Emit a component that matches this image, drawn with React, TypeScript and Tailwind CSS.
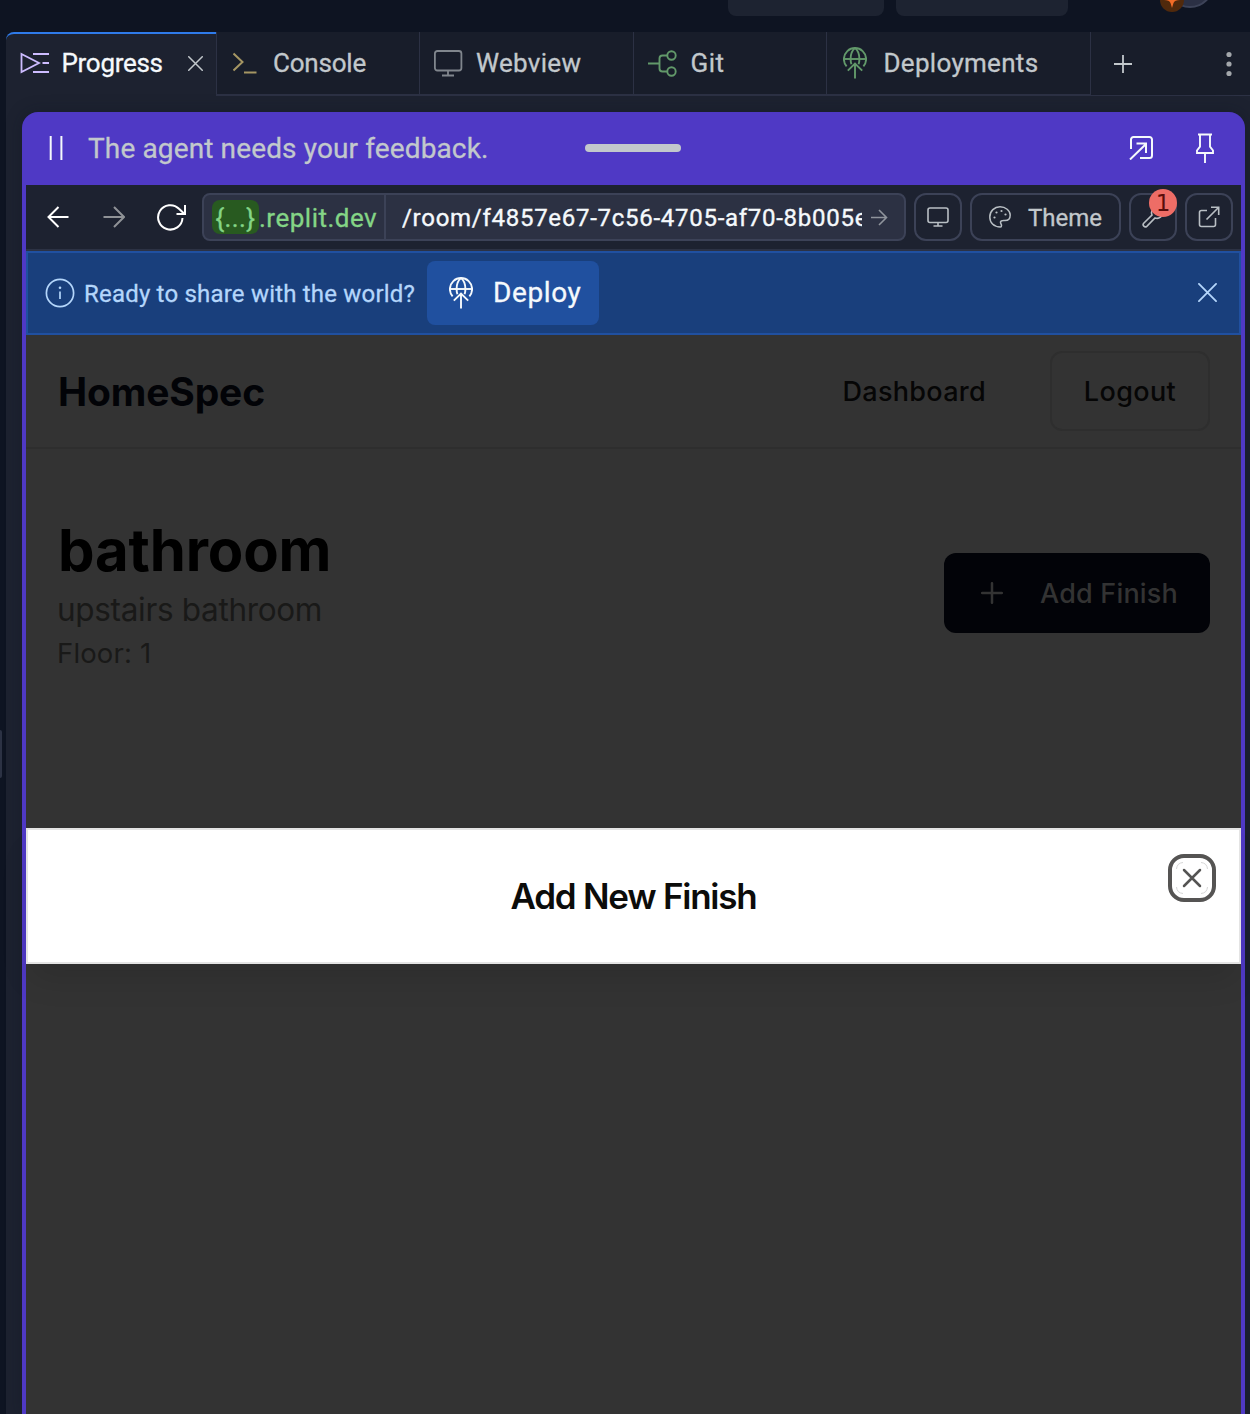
import type { ReactNode } from 'react';

type IconProps = { w: number; h: number; className?: string; sw?: number; children: ReactNode };

function Icon({ w, h, className = '', sw = 2, children }: IconProps) {
  return (
    <svg
      width={w}
      height={h}
      viewBox={`0 0 ${w} ${h}`}
      fill="none"
      stroke="currentColor"
      strokeWidth={sw}
      className={`block shrink-0 ${className}`}
    >
      {children}
    </svg>
  );
}

function DeployIcon({ className = '' }: { className?: string }) {
  return (
    <Icon w={24} h={32} sw={1.9} className={className}>
      <path d="M3.6 19.4A11.1 11.1 0 1 1 20.4 19.4" />
      <path d="M1 12H23" />
      <path d="M12 1C9 3.4 7.6 7.4 7.6 12c0 2 .3 3.700.8 5.200" />
      <path d="M12 1c3 2.400 4.400 6.400 4.400 11 0 2-.3 3.700-.8 5.200" />
      <path d="M12 31.500V16.500M4.800 23.700L12 16.500l7.200 7.200" />
    </Icon>
  );
}

function CloseIcon({ size, sw, className = '' }: { size: number; sw: number; className?: string }) {
  return (
    <svg width={size} height={size} viewBox="0 0 20 20" fill="none" stroke="currentColor" strokeWidth={sw} strokeLinecap="round" className={`block shrink-0 ${className}`}>
      <path d="M1 1l18 18M19 1L1 19" />
    </svg>
  );
}

function TopBar() {
  return (
    <div className="relative h-8 shrink-0 overflow-hidden">
      <div className="flex h-4 gap-3 pl-[728px]">
        <div className="w-[156px] rounded-b-lg bg-[#1d2331]" />
        <div className="w-[172px] rounded-b-lg bg-[#1d2331]" />
      </div>
      <div className="absolute left-[1166px] -top-10 size-12 rounded-full border-2 border-[#3d4358] bg-[#2b3044]" />
      <div className="absolute left-[1160px] -top-3 size-6 rounded-full bg-[#50290c]">
        <svg width="24" height="24" viewBox="0 0 24 24" className="block" fill="#f26b27">
          <path d="M12 4l2 6 6 2q-5.500 0-6.500 3L12 20l-1.500-5q-1-3-6.500-3l6-2z" />
        </svg>
      </div>
    </div>
  );
}

const tabText = "font-['Roboto',sans-serif] text-[26px] leading-8 whitespace-nowrap [-webkit-text-stroke:0.3px]";

function Tabs() {
  return (
    <div className="flex h-16 shrink-0 text-[#c2c8cc]">
      <div className="flex w-[210px] items-center rounded-tl-lg border-t-2 border-[#2f7bea] pb-1 pl-3.5">
        <Icon w={29} h={22} className="text-[#cdbcff]" sw={1.8}>
          <path d="M1.500 2L19 11 1.500 20z" />
          <path d="M13 2h16M22.500 11H29M13 20h16" />
        </Icon>
        <span className={`${tabText} ml-[12.500px] w-[104px] tracking-[-0.300px] text-[#f5f9fc]`}>Progress</span>
        <CloseIcon size={15} sw={2} className="ml-[22.500px]" />
      </div>
      <div className="flex w-[203px] items-center border-b-2 border-l border-[#2c3144] bg-[#181d2a] pl-4">
        <Icon w={25} h={24} className="text-[#a59663]">
          <path d="M.5 2.500l9 8.500-9 8.500" />
          <path d="M11 21.500H23.500" />
        </Icon>
        <span className={`${tabText} ml-[15px] tracking-[-0.2px]`}>Console</span>
      </div>
      <div className="flex w-[214px] items-center border-b-2 border-l border-[#2c3144] bg-[#181d2a] pl-3.5">
        <Icon w={29} h={27} className="text-[#80868d]" sw={1.8}>
          <rect x=".9" y="1" width="26.500" height="19.500" rx="2.500" />
          <path d="M14 20.500V25M8 25.500h12" />
        </Icon>
        <span className={`${tabText} ml-[13px] tracking-[0.3px]`}>Webview</span>
      </div>
      <div className="flex w-[193px] items-center border-b-2 border-l border-[#2c3144] bg-[#181d2a] pl-3.5">
        <Icon w={29} h={27} className="text-[#62996a]" sw={1.900}>
          <path d="M0 13.500h11.500M19 5.500h-4.500a3 3 0 0 0-3 3v10a3 3 0 0 0 3 3H19" />
          <circle cx="23.500" cy="5.500" r="4.200" />
          <circle cx="23.500" cy="21.500" r="4.200" />
        </Icon>
        <span className={`${tabText} ml-[13.500px] tracking-[0.5px]`}>Git</span>
      </div>
      <div className="flex w-[265px] items-center border-x border-b-2 border-[#2c3144] bg-[#181d2a] pl-4">
        <DeployIcon className="text-[#62996a]" />
        <span className={`${tabText} ml-[16.500px] tracking-[0.3px]`}>Deployments</span>
      </div>
      <div className="flex flex-1 items-center justify-between border-b border-[#2c3144] bg-[#181d2a] pr-[18px] pl-[22px]">
        <Icon w={20} h={20} sw={1.800}>
          <path d="M10 1v18M1 10h18" />
        </Icon>
        <Icon w={6} h={26} className="text-[#a3a7ab]" sw={0}>
          <g fill="currentColor">
            <circle cx="3" cy="3.500" r="2.600" />
            <circle cx="3" cy="13" r="2.600" />
            <circle cx="3" cy="22.500" r="2.600" />
          </g>
        </Icon>
      </div>
    </div>
  );
}

function AgentHeader() {
  return (
    <div className="relative flex h-[73px] shrink-0 items-center pr-[26px] pl-[23px] text-[#f5f9fc]">
      <Icon w={16} h={24} className="-mt-px">
        <path d="M1.700 0v24M12.400 0v24" />
      </Icon>
      <span className="ml-[23px] flex-1 font-['Roboto',sans-serif] text-[28px] leading-8 tracking-[0.130px] whitespace-nowrap text-[#c2c8cc] [-webkit-text-stroke:0.3px]">
        The agent needs your feedback.
      </span>
      <div className="absolute left-[559px] top-8 h-2 w-24 rounded-full bg-[#c2c8cc]" />
      <Icon w={24} h={24} className="-mt-px mr-px">
        <path d="M2 13V3.500A2.500 2.500 0 0 1 4.500 1h16A2.500 2.500 0 0 1 23 3.500v16a2.500 2.500 0 0 1-2.500 2.500H11" />
        <path d="M1 23.500L17 8M7.500 7.500H17V17" />
      </Icon>
      <Icon w={20} h={30} className="-mt-0.5 ml-[41px]" sw={1.900}>
        <path d="M3 1.500h14M5 1.500v12.200L2 17.500V20h16v-2.500l-3-3.800V1.500M10 20v10" />
      </Icon>
    </div>
  );
}

const toolButton = 'flex h-12 shrink-0 items-center rounded-xl border-2 border-[#3c4257] text-[#b9bfc4]';

function Toolbar() {
  return (
    <div className="flex h-[66px] shrink-0 items-center border-b-2 border-[#2c3244] bg-[#1d2230] pr-2 pl-[21px] text-white">
      <Icon w={22} h={22}>
        <path d="M21.500 11H1.500M11.500 1L1.500 11l10 10" />
      </Icon>
      <Icon w={22} h={22} className="ml-[34px] text-[#8f9296]">
        <path d="M.5 11h20.500M11 1l10 10-10 10" />
      </Icon>
      <Icon w={30} h={28} className="ml-[32px]">
        <path d="M25.500 15A12.200 12.200 0 1 1 22 5.800L27.500 11" />
        <path d="M28 2v9h-8.500" />
      </Icon>
      <div className="ml-[15px] flex h-12 w-[704px] shrink-0 items-center overflow-hidden rounded-lg border-2 border-[#3c4257] bg-[#2c3143]">
        <div className="flex h-full w-[182px] shrink-0 items-center border-r-2 border-[#3c4257] pl-2 font-['Roboto',sans-serif] text-[26px] leading-9 whitespace-nowrap text-[#84d586] [-webkit-text-stroke:0.3px]">
          <span className="h-[34px] w-[47px] rounded-lg bg-[#285a20] text-center tracking-[0.4px]">{'{...}'}</span>
          <span className="pt-0.5 tracking-[0.500px]">.replit.dev</span>
        </div>
        <div className="ml-4 w-[460px] overflow-hidden pt-0.5 font-['Roboto',sans-serif] text-[24px] leading-8 tracking-[0.720px] whitespace-nowrap text-[#f5f9fc] [-webkit-text-stroke:0.35px]">
          /room/f4857e67-7c56-4705-af70-8b005e
        </div>
        <Icon w={17} h={17} className="ml-[9px] text-[#8f949c]" sw={1.600}>
          <path d="M0 8.500h15.500M8 1l7.500 7.500L8 16" />
        </Icon>
      </div>
      <div className={`${toolButton} ml-2 w-12 justify-center`}>
        <Icon w={22} h={20} sw={1.600}>
          <path d="M3 1h16a2 2 0 0 1 2 2v10.500a2 2 0 0 1-2 2H3a2 2 0 0 1-2-2V3a2 2 0 0 1 2-2zM11 15.500V19M6.500 19h9" />
        </Icon>
      </div>
      <div className={`${toolButton} ml-2 w-[151px] pl-[17px]`}>
        <Icon w={22} h={22} sw={1.500}>
          <path d="M11.500 21C4.500 21 .8 16.500.8 11 .8 5 5.500.8 11 .8S21.200 4.500 21.200 9c0 3.800-2.400 5.600-5.200 5.600-1.800 0-4.200-.3-4.500 1.400-.2 1.500 1 2 1 3.500 0 1-.4 1.500-1 1.500z" />
          <g fill="currentColor" stroke="none">
            <circle cx="5.500" cy="11.500" r="1.100" />
            <circle cx="7.500" cy="6.500" r="1.100" />
            <circle cx="12.500" cy="5" r="1.100" />
            <circle cx="16.500" cy="8.500" r="1.100" />
          </g>
        </Icon>
        <span className="ml-[17px] pt-px font-['Roboto',sans-serif] text-[24px] leading-8 text-[#c2c8cc] [-webkit-text-stroke:0.3px]">Theme</span>
      </div>
      <div className={`${toolButton} relative ml-2 w-12 justify-center`}>
        <Icon w={22} h={22} sw={1.600}>
          <path d="M20.500 5.500l-4 3.500-3.500-3.500L16.500 1.500c-3-1-7 .8-7 5 0 1 .2 1.800.5 2.500L1.700 17.200a2.200 2.200 0 0 0 3.100 3.100L13 12c4 1.500 8-1.500 7.500-6.500z" />
        </Icon>
        <span className="absolute -top-1.5 left-[18px] flex size-7 items-center justify-center rounded-full bg-[#ee6d66] font-['DejaVu_Sans',sans-serif] text-[23px] text-[#5a0d0b]">
          1
        </span>
      </div>
      <div className={`${toolButton} ml-2 w-12 justify-center`}>
        <Icon w={22} h={22} sw={1.600}>
          <path d="M9 4.500H3.500a2 2 0 0 0-2 2v12a2 2 0 0 0 2 2h12a2 2 0 0 0 2-2V12" />
          <path d="M8.500 13.500L20.500 1.500M13 1.300h7.700V9" />
        </Icon>
      </div>
    </div>
  );
}

function DeployBanner() {
  return (
    <div className="flex h-[84px] shrink-0 items-center border-2 border-[#2050a0] bg-[#193f7c] pr-[22px] pl-[17px] text-[#b4d6fb]">
      <Icon w={30} h={30} sw={1.700}>
        <circle cx="15" cy="15" r="13.600" />
        <path d="M15 13.500v7.500" />
        <circle cx="15" cy="9.800" r="1.300" fill="currentColor" stroke="none" />
      </Icon>
      <span className="ml-[9px] w-[343px] pt-px font-['Roboto',sans-serif] text-[24px] leading-8 tracking-[0.200px] whitespace-nowrap [-webkit-text-stroke:0.3px]">
        Ready to share with the world?
      </span>
      <div className="flex h-16 w-[172px] shrink-0 items-center rounded-lg bg-[#20509f] pl-[22px] text-[#f5f9fc]">
        <DeployIcon />
        <span className="ml-5 font-['Roboto',sans-serif] text-[28px] leading-8 tracking-[0.600px] [-webkit-text-stroke:0.3px]">Deploy</span>
      </div>
      <div className="flex-1" />
      <CloseIcon size={19} sw={1.900} className="-mt-px" />
    </div>
  );
}

function AppPage() {
  return (
    <div className="relative flex-1 bg-[#333333] font-['Inter',sans-serif]">
      <div className="flex h-[114px] items-center border-b-2 border-[#2e2e2e] pr-[31px] pl-8">
        <span className="flex-1 pt-0.5 text-[39px] leading-[52px] font-bold tracking-[-0.150px] text-[#020307]">HomeSpec</span>
        <span className="pt-0.5 text-[27px] leading-10 font-medium tracking-[0.300px] text-[#060606]">Dashboard</span>
        <div className="ml-16 flex h-20 w-40 items-center justify-center rounded-xl border-2 border-[#2e2e2e] pt-0.5 text-[27px] font-medium tracking-[0.400px] text-[#060606]">
          Logout
        </div>
      </div>
      <div className="flex justify-between pt-[61px] pr-[31px] pl-8">
        <div>
          <h1 className="text-[58px] leading-[80px] font-bold tracking-[-0.150px] text-black">bathroom</h1>
          <p className="-ml-px text-[31.500px] leading-10 tracking-[-0.320px] text-[#191918]">upstairs bathroom</p>
          <p className="-ml-px text-[27.500px] leading-[46px] tracking-[0.150px] text-[#191918]">Floor: 1</p>
        </div>
        <div className="mt-[43px] flex h-20 w-[266px] items-center rounded-xl bg-[#020308] pl-[37px] text-[#333333]">
          <Icon w={22} h={22} sw={2.500}>
            <path strokeLinecap="round" d="M11 1.200v19.600M1.200 11h19.600" />
          </Icon>
          <span className="ml-[37px] pt-0.5 text-[27px] font-medium tracking-[0.200px] whitespace-nowrap">Add Finish</span>
        </div>
      </div>
      <div className="absolute inset-x-0 top-[493px] flex h-[136px] items-center justify-center border-2 border-[#e4e4e4] bg-white shadow-[0_20px_30px_-6px_rgba(0,0,0,0.12)]">
        <h2 className="text-[35px] leading-10 font-semibold tracking-[-1.250px] text-[#0c0c0a]">Add New Finish</h2>
        <div className="absolute top-6 right-[23px] size-12 rounded-2xl border-4 border-[#555453] text-[#555453]">
          <svg width="40" height="40" viewBox="0 0 40 40" fill="none" className="block">
            <path stroke="#cccccc" strokeWidth="0.8" d="M4.500 11Q5 5 11 4.500M29 4.500Q35 5 35.500 11M35.500 29Q35 35 29 35.500M11 35.500Q5 35 4.500 29" />
            <path stroke="currentColor" strokeWidth="2.500" strokeLinecap="round" d="M12 12l16 16M28 12L12 28" />
          </svg>
        </div>
      </div>
    </div>
  );
}

export default function App() {
  return (
    <div className="relative flex h-[1414px] w-[1250px] flex-col overflow-hidden bg-[#0e1422]">
      <TopBar />
      <div className="absolute left-0 top-[730px] h-12 w-0.5 rounded-r bg-[#2c3244]" />
      <div className="ml-1.5 flex min-h-0 flex-1 flex-col rounded-tl-lg bg-[#1d2230]">
        <Tabs />
        <div className="mt-4 mr-[5px] ml-4 flex min-h-0 flex-1 flex-col rounded-t-2xl bg-[#4f39c5] px-1 shadow-[0_0_16px_rgba(14,20,34,0.35)]">
          <AgentHeader />
          <Toolbar />
          <DeployBanner />
          <AppPage />
        </div>
      </div>
    </div>
  );
}
